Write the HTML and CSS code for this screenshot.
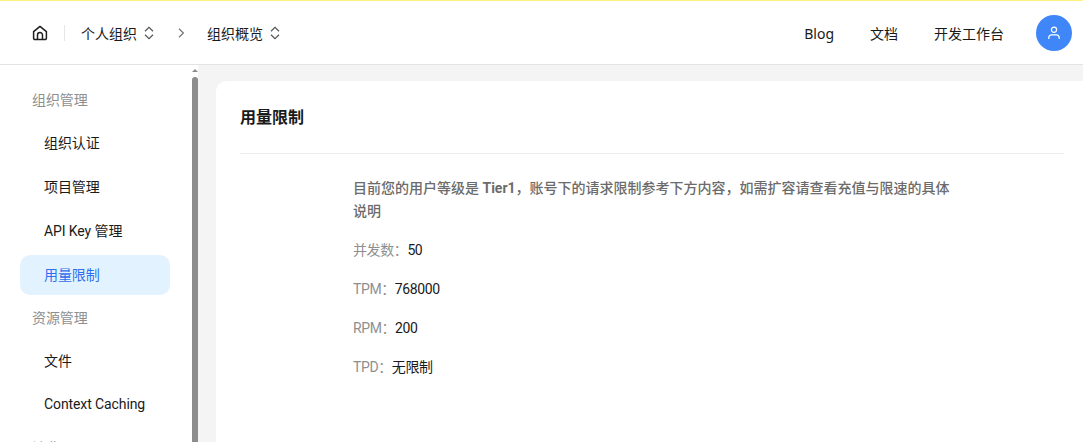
FILE: index.html
```html
<!DOCTYPE html>
<html lang="zh-CN">
<head>
  <meta charset="UTF-8" />
  <meta name="viewport" content="width=device-width, initial-scale=1" />
  <title>用量限制</title>
  <link rel="stylesheet" href="styles.css">
</head>
<body>
  <!-- top bar -->
  <header class="topbar">
    <div class="crumbs">
      <svg class="home-icon" width="16" height="16" viewBox="0 0 16 16" fill="none" stroke="#1f1f1f" stroke-width="1.5" stroke-linejoin="round">
        <path d="M1.6 6.6 8 1.4l6.4 5.2v6.6a1.3 1.3 0 0 1-1.3 1.3H2.9a1.3 1.3 0 0 1-1.3-1.3z"/>
        <path d="M5.5 14.4V10a2.5 2.5 0 0 1 5 0v4.4"/>
      </svg>
      <span class="divider"></span>
      <span class="crumb">个人组织</span>
      <svg class="updown" width="10" height="14" viewBox="0 0 10 14" fill="none" stroke="#555" stroke-width="1.2">
        <path d="M1 5.2 5 1.4l4 3.8M1 8.8l4 3.8 4-3.8"/>
      </svg>
      <svg class="chevron" width="7" height="10" viewBox="0 0 7 10" fill="none" stroke="#777" stroke-width="1.2">
        <path d="M1 .8 5.4 5 1 9.2"/>
      </svg>
      <span class="crumb">组织概览</span>
      <svg class="updown" width="10" height="14" viewBox="0 0 10 14" fill="none" stroke="#555" stroke-width="1.2">
        <path d="M1 5.2 5 1.4l4 3.8M1 8.8l4 3.8 4-3.8"/>
      </svg>
    </div>
    <nav class="toplinks">
      <a href="#">Blog</a>
      <a href="#">文档</a>
      <a href="#">开发工作台</a>
      <span class="avatar">
        <svg width="14" height="14" viewBox="0 0 14 14" fill="none" stroke="#fff" stroke-width="1.2">
          <circle cx="7" cy="3.8" r="2.6"/>
          <path d="M1.8 13v-1.2a3 3 0 0 1 3-3h4.4a3 3 0 0 1 3 3V13"/>
        </svg>
      </span>
    </nav>
  </header>

  <div class="layout">
    <!-- side menu with its scrollbar -->
    <aside class="sidebar">
      <div class="menu">
        <div class="group-title">组织管理</div>
        <a class="item" href="#">组织认证</a>
        <a class="item" href="#">项目管理</a>
        <a class="item" href="#">API Key 管理</a>
        <a class="item active" href="#">用量限制</a>
        <div class="group-title">资源管理</div>
        <a class="item" href="#">文件</a>
        <a class="item" href="#">Context Caching</a>
        <div class="group-title">计费</div>
      </div>
      <div class="scrollbar">
        <span class="scroll-arrow"></span>
        <span class="scroll-thumb"></span>
      </div>
    </aside>

    <main class="content">
      <section class="card">
        <h2 class="card-title">用量限制</h2>
        <div class="card-body">
          <p class="intro">目前您的用户等级是 <b>Tier1</b>，账号下的请求限制参考下方内容，如需扩容请查看充值与限速的具体说明</p>
          <p class="stat">并发数：<span>50</span></p>
          <p class="stat">TPM：<span>768000</span></p>
          <p class="stat">RPM：<span>200</span></p>
          <p class="stat">TPD：<span>无限制</span></p>
        </div>
      </section>
    </main>
  </div>
</body>
</html>
```

FILE: styles.css
```css
/* page */
html, body {
  height: 100%;
}

body {
  margin: 0;
  overflow: hidden;
  background-color: #fff;
  color: #1a1a1a;
  font-family: Roboto, "Noto Sans CJK SC", sans-serif;
  font-size: 14px;
  display: flex;
  flex-direction: column;
}

a {
  color: inherit;
  text-decoration: none;
}

/* top bar */
.topbar {
  flex: 0 0 auto;
  box-sizing: border-box;
  height: 65px;
  border-top: 1px solid #fff27f;
  border-bottom: 1px solid #e3e3e3;
  padding: 1px 11px 0 32px;
  display: flex;
  align-items: center;
  justify-content: space-between;
}

.crumbs {
  display: flex;
  align-items: center;
}

.home-icon {
  margin-right: 16px;
}

.divider {
  width: 1px;
  height: 16px;
  background-color: #e6e6e6;
  margin-right: 16px;
}

.updown {
  margin-left: 7px;
}

.chevron {
  margin: 0 22px 0 24px;
}

.toplinks {
  display: flex;
  align-items: center;
  gap: 36px;
  font-family: "Noto Sans", "Noto Sans CJK SC", sans-serif;
}

.avatar {
  width: 36px;
  height: 36px;
  margin-left: -4px;
  border-radius: 50%;
  background-color: #3f86f8;
  display: flex;
  align-items: center;
  justify-content: center;
}

/* main area */
.layout {
  flex: 1;
  display: flex;
  min-height: 0;
}

.sidebar {
  flex: 0 0 198px;
  display: flex;
  overflow: hidden;
}

.menu {
  flex: 1;
  padding: 16px 22px 0 20px;
  letter-spacing: -0.1px;
}

.group-title {
  box-sizing: border-box;
  height: 38px;
  margin-bottom: 4px;
  padding: 0 0 2px 12px;
  display: flex;
  align-items: center;
  color: #8f8f8f;
}

.item {
  box-sizing: border-box;
  display: flex;
  align-items: center;
  height: 40px;
  margin-bottom: 4px;
  padding: 0 0 2px 24px;
  border-radius: 10px;
}

.item.active {
  background-color: #e3f2ff;
  color: #2f6fed;
}

.scrollbar {
  flex: 0 0 6px;
  display: flex;
  flex-direction: column;
  align-items: center;
}

.scroll-arrow {
  width: 0;
  height: 0;
  margin-top: 4px;
  border-left: 3px solid transparent;
  border-right: 3px solid transparent;
  border-bottom: 3px solid #8a8a8a;
}

.scroll-thumb {
  width: 6px;
  flex: 1;
  margin-top: 5px;
  background-color: #8c8c8c;
  border-radius: 3px 3px 0 0;
}

.content {
  flex: 1;
  min-width: 0;
  background-color: #f4f4f4;
  padding: 16px 0 0 18px;
}

.card {
  height: 100%;
  background-color: #fff;
  border-radius: 10px 0 0 0;
  padding: 0 19px 0 24px;
}

.card-title {
  box-sizing: border-box;
  margin: 0;
  height: 73px;
  padding-bottom: 2px;
  display: flex;
  align-items: center;
  border-bottom: 1px solid #ededed;
  font-size: 16px;
  font-weight: 700;
}

.card-body {
  width: 600px;
  padding: 23px 0 0 113px;
  color: #8f8f8f;
}

.intro {
  margin: 0 0 17px;
  line-height: 23px;
  color: #6b6b6b;
  font-weight: 500;
}

.stat {
  margin: 0 0 19px;
  line-height: 20px;
  letter-spacing: -0.4px;
}

.stat span {
  color: #1a1a1a;
}
```
